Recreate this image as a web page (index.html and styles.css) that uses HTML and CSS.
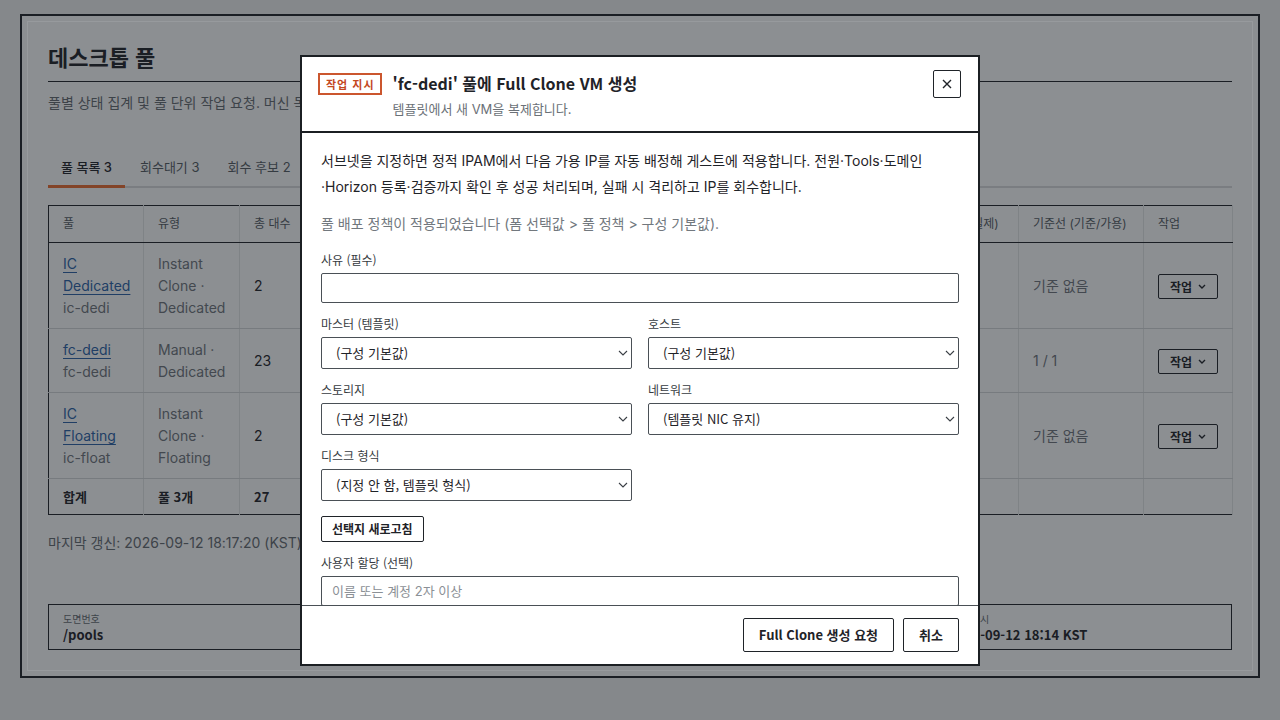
FILE: index.html
```html
<!DOCTYPE html>
<html lang="ko">
<head>
    <meta charset="UTF-8">
    <title>데스크톱 풀</title>
    <link rel="stylesheet" href="styles.css">
</head>
<body>
<div class="page">
    <h1 class="page-title">데스크톱 풀</h1>
    <p class="page-desc">풀별 상태 집계 및 풀 단위 작업 요청. 머신 목록은 머신 화면에서 확인합니다.</p>

    <div class="tabs">
        <div class="tab active">풀 목록 3</div>
        <div class="tab">회수대기 3</div>
        <div class="tab">회수 후보 2</div>
        <div class="tab">배포 정책 1</div>
    </div>

    <table class="pool-table">
        <colgroup>
            <col style="width: 95px">
            <col style="width: 96px">
            <col style="width: 100px">
            <col style="width: 100px">
            <col style="width: 100px">
            <col style="width: 130px">
            <col style="width: 100px">
            <col style="width: 132px">
            <col style="width: 117px">
            <col style="width: 125px">
            <col style="width: 89px">
        </colgroup>
        <thead>
        <tr>
            <th>풀</th>
            <th>유형</th>
            <th>총 대수</th>
            <th>가용</th>
            <th>사용 중</th>
            <th>연결 끊김</th>
            <th>오류</th>
            <th>유지보수</th>
            <th>할당 (배정/실제)</th>
            <th>기준선 (기준/가용)</th>
            <th>작업</th>
        </tr>
        </thead>
        <tbody>
        <tr>
            <td><a href="#">IC Dedicated</a><div class="muted">ic-dedi</div></td>
            <td class="muted">Instant Clone · Dedicated</td>
            <td>2</td>
            <td>2</td>
            <td>0</td>
            <td>0</td>
            <td>0</td>
            <td>0</td>
            <td>0 / 0</td>
            <td class="muted">기준 없음</td>
            <td><button class="row-action">작업 <svg width="8" height="5" viewBox="0 0 8 5"><polyline points="1,1 4,4 7,1" fill="none" stroke="currentColor" stroke-width="1.4"/></svg></button></td>
        </tr>
        <tr>
            <td><a href="#">fc-dedi</a><div class="muted">fc-dedi</div></td>
            <td class="muted">Manual · Dedicated</td>
            <td>23</td>
            <td>21</td>
            <td>2</td>
            <td>0</td>
            <td>0</td>
            <td>0</td>
            <td>2 / 2</td>
            <td class="muted">1 / 1</td>
            <td><button class="row-action">작업 <svg width="8" height="5" viewBox="0 0 8 5"><polyline points="1,1 4,4 7,1" fill="none" stroke="currentColor" stroke-width="1.4"/></svg></button></td>
        </tr>
        <tr>
            <td><a href="#">IC Floating</a><div class="muted">ic-float</div></td>
            <td class="muted">Instant Clone · Floating</td>
            <td>2</td>
            <td>2</td>
            <td>0</td>
            <td>0</td>
            <td>0</td>
            <td>0</td>
            <td>0 / 0</td>
            <td class="muted">기준 없음</td>
            <td><button class="row-action">작업 <svg width="8" height="5" viewBox="0 0 8 5"><polyline points="1,1 4,4 7,1" fill="none" stroke="currentColor" stroke-width="1.4"/></svg></button></td>
        </tr>
        </tbody>
        <tfoot>
        <tr>
            <td>합계</td>
            <td>풀 3개</td>
            <td>27</td>
            <td>25</td>
            <td>2</td>
            <td>0</td>
            <td>0</td>
            <td>0</td>
            <td>2 / 2</td>
            <td></td>
            <td></td>
        </tr>
        </tfoot>
    </table>

    <p class="updated">마지막 갱신: 2026-09-12 18:17:20 (KST)</p>

    <div class="meta">
        <div class="meta-cell">
            <div class="meta-label">도면번호</div>
            <div class="meta-value">/pools</div>
        </div>
        <div class="meta-cell">
            <div class="meta-label">화면</div>
            <div class="meta-value">데스크톱 풀</div>
        </div>
        <div class="meta-cell">
            <div class="meta-label">권한</div>
            <div class="meta-value">운영자</div>
        </div>
        <div class="meta-cell">
            <div class="meta-label">발행 일시</div>
            <div class="meta-value">2026-09-12 18:14 KST</div>
        </div>
    </div>
</div>

<div class="backdrop">
    <div class="modal">
        <div class="modal-head">
            <span class="badge">작업 지시</span>
            <div class="modal-titles">
                <h2 class="modal-title">'fc-dedi' 풀에 Full Clone VM 생성</h2>
                <p class="modal-sub">템플릿에서 새 VM을 복제합니다.</p>
            </div>
            <button class="close" aria-label="닫기">
                <svg width="10" height="10" viewBox="0 0 10 10"><path d="M1 1 L9 9 M9 1 L1 9" stroke="currentColor" stroke-width="1.4" fill="none"/></svg>
            </button>
        </div>

        <div class="modal-body">
            <p class="notice">서브넷을 지정하면 정적 IPAM에서 다음 가용 IP를 자동 배정해 게스트에 적용합니다. 전원·Tools·도메인<br>·Horizon 등록·검증까지 확인 후 성공 처리되며, 실패 시 격리하고 IP를 회수합니다.</p>
            <p class="policy">풀 배포 정책이 적용되었습니다 (폼 선택값 &gt; 풀 정책 &gt; 구성 기본값).</p>

            <div class="form">
                <div class="field full">
                    <label for="reason">사유 (필수)</label>
                    <input id="reason" class="input" type="text">
                </div>
                <div class="field">
                    <label for="master">마스터 (템플릿)</label>
                    <div class="select-wrap">
                        <select id="master" class="select"><option>(구성 기본값)</option></select>
                        <svg class="chev" width="10" height="6" viewBox="0 0 10 6"><polyline points="1,1 5,5 9,1" fill="none" stroke="currentColor" stroke-width="1.1"/></svg>
                    </div>
                </div>
                <div class="field">
                    <label for="host">호스트</label>
                    <div class="select-wrap">
                        <select id="host" class="select"><option>(구성 기본값)</option></select>
                        <svg class="chev" width="10" height="6" viewBox="0 0 10 6"><polyline points="1,1 5,5 9,1" fill="none" stroke="currentColor" stroke-width="1.1"/></svg>
                    </div>
                </div>
                <div class="field">
                    <label for="storage">스토리지</label>
                    <div class="select-wrap">
                        <select id="storage" class="select"><option>(구성 기본값)</option></select>
                        <svg class="chev" width="10" height="6" viewBox="0 0 10 6"><polyline points="1,1 5,5 9,1" fill="none" stroke="currentColor" stroke-width="1.1"/></svg>
                    </div>
                </div>
                <div class="field">
                    <label for="network">네트워크</label>
                    <div class="select-wrap">
                        <select id="network" class="select"><option>(템플릿 NIC 유지)</option></select>
                        <svg class="chev" width="10" height="6" viewBox="0 0 10 6"><polyline points="1,1 5,5 9,1" fill="none" stroke="currentColor" stroke-width="1.1"/></svg>
                    </div>
                </div>
                <div class="field">
                    <label for="disk">디스크 형식</label>
                    <div class="select-wrap">
                        <select id="disk" class="select"><option>(지정 안 함, 템플릿 형식)</option></select>
                        <svg class="chev" width="10" height="6" viewBox="0 0 10 6"><polyline points="1,1 5,5 9,1" fill="none" stroke="currentColor" stroke-width="1.1"/></svg>
                    </div>
                </div>
                <div class="field full">
                    <button class="btn-sm">선택지 새로고침</button>
                </div>
                <div class="field full">
                    <label for="user">사용자 할당 (선택)</label>
                    <input id="user" class="input" type="text" placeholder="이름 또는 계정 2자 이상">
                </div>
            </div>
        </div>

        <div class="modal-foot">
            <button class="btn">Full Clone 생성 요청</button>
            <button class="btn">취소</button>
        </div>
    </div>
</div>
</body>
</html>
```

FILE: styles.css
```css
body, html {
    margin: 0;
    height: 100%;
}

body {
    background: #d8dada;
    font-family: Inter, "Noto Sans CJK KR", sans-serif;
    font-size: 14px;
    color: #1f2328;
}

button, input, select {
    font-family: inherit;
}

/* Page behind the dialog */
.page {
    margin: 14px 20px 0;
    padding: 25px 26px 26px;
    border: 2px solid #1f2328;
    background: #e4e6e6;
    box-shadow: inset 0 0 0 5px #e4e6e6, inset 0 0 0 6px #f7f8f8;
}

.page-title {
    margin: 0;
    padding-bottom: 10px;
    border-bottom: 1px solid #1f2328;
    font-family: "Noto Sans CJK KR", sans-serif;
    font-size: 22px;
    line-height: 30px;
    font-weight: 700;
}

.page-desc {
    margin: 11px 0 0;
    line-height: 20px;
    color: #5c6268;
}

.tabs {
    display: flex;
    gap: 2px;
    margin-top: 44px;
    border-bottom: 2px solid #c4c7c8;
}

.tab {
    padding: 0 13px 8px;
    margin-bottom: -2px;
    font-size: 13px;
    line-height: 20px;
    color: #4f555b;
    border-bottom: 3px solid transparent;
}

.tab.active {
    color: #1f2328;
    font-weight: 500;
    border-bottom-color: #d4652f;
}

.pool-table {
    width: 100%;
    margin-top: 17px;
    border-collapse: collapse;
    table-layout: fixed;
    border: 1px solid #1f2328;
}

.pool-table th {
    padding: 9px 14px 9px;
    font-size: 12px;
    font-weight: 400;
    line-height: 18px;
    text-align: left;
    color: #4f555b;
    border-bottom: 1px solid #1f2328;
    border-right: 1px solid #cdd0d1;
    white-space: nowrap;
}

.pool-table td {
    padding: 10px 14px 9px;
    line-height: 22px;
    vertical-align: middle;
    border-bottom: 1px solid #bfc3c4;
    border-right: 1px solid #cdd0d1;
}

.pool-table tfoot td {
    padding: 7px 14px 6px;
    border-top: 1px solid #1f2328;
    border-bottom: 0;
    font-family: "Noto Sans CJK KR", sans-serif;
    font-size: 13px;
    font-weight: 700;
}

.pool-table a {
    color: #2a5b98;
    text-decoration: underline;
    text-underline-offset: 3px;
}

.muted {
    color: #666c72;
}

.row-action {
    display: inline-flex;
    align-items: center;
    gap: 6px;
    height: 25px;
    padding: 0 11px;
    border: 1px solid #1f2328;
    border-radius: 2px;
    background: transparent;
    color: #1f2328;
    font-family: "Noto Sans CJK KR", sans-serif;
    font-size: 12px;
    font-weight: 700;
    white-space: nowrap;
}

.updated {
    margin: 18px 0 0;
    line-height: 20px;
    color: #5c6268;
}

.meta {
    display: grid;
    grid-template-columns: repeat(4, 1fr);
    margin-top: 51px;
    border: 1px solid #1f2328;
}

.meta-cell {
    padding: 7px 14px 6px;
    font-family: "Noto Sans CJK KR", sans-serif;
}

.meta-label {
    font-size: 10px;
    line-height: 14px;
    color: #5c6268;
}

.meta-value {
    font-size: 13px;
    line-height: 17px;
    font-weight: 700;
}

/* Dialog */
.backdrop {
    position: fixed;
    inset: 0;
    display: flex;
    align-items: center;
    justify-content: center;
    background: rgba(18, 24, 30, 0.42);
}

.modal {
    display: flex;
    flex-direction: column;
    box-sizing: border-box;
    width: 680px;
    height: 611px;
    border: 2px solid #1b1f23;
    background: #fff;
}

.modal-head {
    display: flex;
    align-items: flex-start;
    gap: 11px;
    padding: 14px 17px 12px 16px;
    border-bottom: 2px solid #1b1f23;
}

.badge {
    flex-shrink: 0;
    margin-top: 2px;
    padding: 0 5px 0 6px;
    border: 2px solid #cb562e;
    color: #c4481f;
    font-family: "Noto Sans CJK KR", sans-serif;
    font-size: 11px;
    line-height: 18px;
    font-weight: 700;
    letter-spacing: 1px;
}

.modal-title {
    margin: 0;
    font-family: "Noto Sans CJK KR", sans-serif;
    font-size: 16px;
    line-height: 24px;
    font-weight: 700;
}

.modal-sub {
    margin: 4px 0 0;
    font-size: 13px;
    line-height: 20px;
    color: #6b7177;
}

.close {
    display: flex;
    align-items: center;
    justify-content: center;
    width: 28px;
    height: 28px;
    margin: -1px 0 0 auto;
    padding: 0;
    border: 1px solid #1f2328;
    border-radius: 2px;
    background: #fff;
    color: #1f2328;
}

.modal-body {
    flex: 1;
    overflow: auto;
    padding: 15px 19px;
}

.modal-body::-webkit-scrollbar {
    display: none;
}

.notice {
    margin: 0 0 11px;
    line-height: 26px;
}

.policy {
    margin: 0;
    line-height: 26px;
    color: #72787e;
}

.form {
    display: grid;
    grid-template-columns: 1fr 1fr;
    column-gap: 16px;
    row-gap: 12px;
    margin-top: 14px;
}

.field.full {
    grid-column: 1 / -1;
}

.field label {
    display: block;
    margin-bottom: 4px;
    font-family: "Noto Sans CJK KR", sans-serif;
    font-size: 12px;
    line-height: 18px;
    color: #363b41;
}

.input {
    box-sizing: border-box;
    width: 100%;
    height: 30px;
    padding: 0 10px;
    border: 1px solid #4a5056;
    border-radius: 2px;
    font-size: 13px;
    color: #1f2328;
}

.input::placeholder {
    color: #8b9096;
}

.select-wrap {
    position: relative;
}

.select {
    box-sizing: border-box;
    width: 100%;
    height: 32px;
    padding: 0 24px 0 14px;
    border: 1px solid #4a5056;
    border-radius: 2px;
    background: #fff;
    font-family: "Noto Sans CJK KR", sans-serif;
    font-size: 13px;
    color: #1f2328;
    appearance: none;
}

.chev {
    position: absolute;
    right: 4px;
    top: 13px;
    color: #3a3f45;
    pointer-events: none;
}

.btn-sm {
    height: 26px;
    margin-top: 3px;
    padding: 0 10px;
    border: 1px solid #1f2328;
    border-radius: 2px;
    background: #fff;
    color: #1f2328;
    font-family: "Noto Sans CJK KR", sans-serif;
    font-size: 12px;
    font-weight: 700;
}

.modal-foot {
    display: flex;
    justify-content: flex-end;
    gap: 9px;
    padding: 12px 19px;
    border-top: 1px solid #4a5056;
}

.btn {
    height: 34px;
    padding: 0 15px;
    border: 1px solid #1f2328;
    border-radius: 2px;
    background: #fff;
    color: #1f2328;
    font-family: "Noto Sans CJK KR", sans-serif;
    font-size: 13px;
    font-weight: 700;
}
```
